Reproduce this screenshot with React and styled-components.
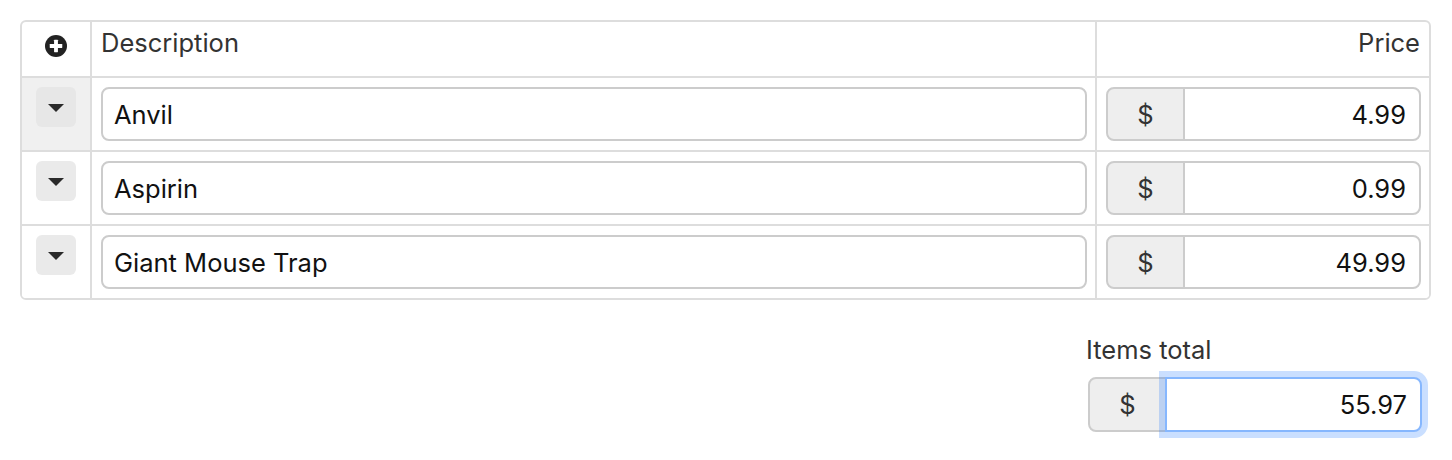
import React from "react";
import styled, { createGlobalStyle, css } from "styled-components";

const GlobalStyle = createGlobalStyle`
  html, body {
    margin: 0;
    padding: 0;
    background: #ffffff;
  }
  body {
    font-family: Inter, "Open Sans", "Liberation Sans", sans-serif;
    font-size: 25.5px;
    color: #333333;
  }
  * { box-sizing: border-box; }
`;

const Page = styled.div`
  padding: 20px 21px 20px 20px;
`;

const Table = styled.div`
  display: grid;
  grid-template-columns: 68px 1fr 334px;
  border: 2px solid #dddddd;
  border-radius: 6px;
  overflow: hidden;
`;

const HeadCell = styled.div`
  height: 54px;
  padding: 6px 9px;
  line-height: 30px;
  color: #333333;
  text-align: ${(p) => p.$align || "left"};
  ${(p) => p.$divider && css`border-left: 2px solid #dddddd;`}
`;

const IconCell = styled(HeadCell)`
  display: flex;
  justify-content: center;
  padding-top: 13px;
`;

const Cell = styled.div`
  border-top: 2px solid #dddddd;
  padding: 9px 8px 9px 9px;
  background: ${(p) => (p.$active ? "#f0f0f0" : "#ffffff")};
  ${(p) => p.$divider && css`border-left: 2px solid #dddddd;`}
`;

const ToggleCell = styled(Cell)`
  display: flex;
  justify-content: center;
  align-items: flex-start;
  padding: 9px 0;
`;

const CaretButton = styled.button`
  width: 40px;
  height: 40px;
  border: none;
  border-radius: 6px;
  background: ${(p) => (p.$active ? "#e7e7e7" : "#eaeaea")};
  display: flex;
  align-items: center;
  justify-content: center;
  padding: 0;
  cursor: pointer;
`;

const Caret = styled.span`
  width: 0;
  height: 0;
  border-top: 8px solid #2a2a2a;
  border-left: 8px solid transparent;
  border-right: 8px solid transparent;
  margin-top: 1px;
`;

const TextInput = styled.input`
  display: block;
  width: 100%;
  height: 54px;
  border: 2px solid #cccccc;
  border-radius: 8px;
  padding: 0 11px;
  font-family: inherit;
  font-size: 25.5px;
  color: #111111;
  background: #ffffff;
  outline: none;
`;

const Group = styled.div`
  display: flex;
  height: ${(p) => (p.$tall ? "55px" : "54px")};
`;

const Addon = styled.span`
  flex: 0 0 79px;
  display: flex;
  align-items: center;
  justify-content: center;
  background: #eeeeee;
  border: 2px solid #cccccc;
  border-radius: 8px 0 0 8px;
  color: #333333;
  font-size: 25.5px;
`;

const AmountInput = styled.input`
  flex: 1;
  min-width: 0;
  height: 100%;
  margin-left: -2px;
  border: 2px solid #cccccc;
  border-radius: 0 8px 8px 0;
  padding: 0 13px 0 12px;
  text-align: right;
  font-family: inherit;
  font-size: 25.5px;
  color: #111111;
  background: #ffffff;
  outline: none;
  ${(p) =>
    p.$focused &&
    css`
      position: relative;
      z-index: 1;
      border-color: #86b7fe;
      box-shadow: 0 0 0 6px rgba(13, 110, 253, 0.22);
    `}
`;

const Footer = styled.div`
  display: flex;
  justify-content: flex-end;
  padding-right: 9px;
  margin-top: 35px;
`;

const TotalBlock = styled.div`
  width: 334px;
`;

const Label = styled.div`
  line-height: 30px;
  color: #333333;
  margin-bottom: 12px;
  margin-left: -2px;
`;

const PlusIcon = () => (
  <svg width="22" height="22" viewBox="0 0 20 20" aria-hidden="true">
    <circle cx="10" cy="10" r="10" fill="#222222" />
    <rect x="4.3" y="8.25" width="11.4" height="3.5" rx="0.4" fill="#ffffff" />
    <rect x="8.25" y="4.3" width="3.5" height="11.4" rx="0.4" fill="#ffffff" />
  </svg>
);

const items = [
  { name: "Anvil", price: "4.99", active: true },
  { name: "Aspirin", price: "0.99" },
  { name: "Giant Mouse Trap", price: "49.99" },
];

export default function App() {
  return (
    <Page>
      <GlobalStyle />
      <Table>
        <IconCell>
          <PlusIcon />
        </IconCell>
        <HeadCell $divider>Description</HeadCell>
        <HeadCell $divider $align="right">
          Price
        </HeadCell>
        {items.map((item) => (
          <React.Fragment key={item.name}>
            <ToggleCell $active={item.active}>
              <CaretButton $active={item.active} aria-label="toggle">
                <Caret />
              </CaretButton>
            </ToggleCell>
            <Cell $divider>
              <TextInput defaultValue={item.name} />
            </Cell>
            <Cell $divider>
              <Group>
                <Addon>$</Addon>
                <AmountInput defaultValue={item.price} />
              </Group>
            </Cell>
          </React.Fragment>
        ))}
      </Table>
      <Footer>
        <TotalBlock>
          <Label>Items total</Label>
          <Group $tall>
            <Addon>$</Addon>
            <AmountInput $focused defaultValue="55.97" />
          </Group>
        </TotalBlock>
      </Footer>
    </Page>
  );
}
